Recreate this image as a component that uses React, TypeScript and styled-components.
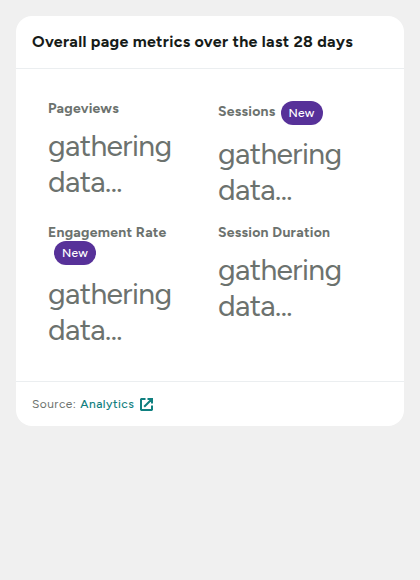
import React from 'react';
import styled, { createGlobalStyle } from 'styled-components';

const Global = createGlobalStyle`
  * { box-sizing: border-box; }
  body {
    margin: 0;
    background: #f0f0f0;
    color: #6c726e;
    font-family: 'Google Sans', Figtree, Lato, sans-serif;
  }
`;

const Page = styled.main`
  padding: 16px;
`;

const Card = styled.section`
  display: flex;
  flex-direction: column;
  height: 410px;
  background: #fff;
  border-radius: 16px;
  overflow: hidden;
`;

const Title = styled.h3`
  flex: none;
  height: 53px;
  margin: 0;
  padding: 14px 16px;
  border-bottom: 1px solid #ebeef0;
  color: #161b18;
  font-size: 16px;
  font-weight: 700;
  line-height: 24px;
  letter-spacing: 0.3px;
  white-space: nowrap;
`;

const Metrics = styled.div`
  flex: 1;
  display: grid;
  grid-template-columns: repeat(2, 1fr);
  grid-template-rows: 124px auto;
  column-gap: 16px;
  padding: 29px 32px 0;
`;

const Label = styled.div<{ $stacked?: boolean; $inline?: boolean }>`
  display: flex;
  flex-direction: ${p => (p.$stacked ? 'column' : 'row')};
  align-items: flex-start;
  height: ${p => (p.$stacked ? 54 : p.$inline ? 38 : 30)}px;
  padding-top: ${p => (p.$inline ? 3 : 0)}px;
  font-size: 14px;
  font-weight: 700;
  line-height: 22px;
  letter-spacing: 0.25px;
  white-space: nowrap;
`;

const Badge = styled.span<{ $stacked?: boolean }>`
  width: 42px;
  height: 24px;
  margin: ${p => (p.$stacked ? '-3px 0 0 6px' : '0 0 0 5px')};
  border-radius: 12px;
  background: #573199;
  color: #fff;
  font-size: 12px;
  font-weight: 500;
  line-height: 24px;
  text-align: center;
`;

const Value = styled.div`
  font-size: 30px;
  font-weight: 400;
  line-height: 36px;
  letter-spacing: -0.6px;
`;

const Footer = styled.footer`
  flex: none;
  display: flex;
  align-items: center;
  height: 45px;
  padding: 0 16px;
  border-top: 1px solid #ebeef0;
  font-size: 12px;
  font-weight: 400;
  letter-spacing: 0.45px;
`;

const SourceLink = styled.a`
  display: flex;
  align-items: center;
  gap: 6px;
  margin-left: 4px;
  color: #108080;
  font-weight: 500;
`;

const metrics = [
  { name: 'Pageviews' },
  { name: 'Sessions', badge: true },
  { name: 'Engagement Rate', badge: true, stacked: true },
  { name: 'Session Duration' },
];

export default function App() {
  return (
    <Page>
      <Global />
      <Card>
        <Title>Overall page metrics over the last 28 days</Title>
        <Metrics>
          {metrics.map(m => (
            <div key={m.name}>
              <Label $stacked={m.stacked} $inline={m.badge && !m.stacked}>
                <span>{m.name}</span>
                {m.badge && <Badge $stacked={m.stacked}>New</Badge>}
              </Label>
              <Value>gathering data...</Value>
            </div>
          ))}
        </Metrics>
        <Footer>
          <span>Source:</span>
          <SourceLink>
            Analytics
            <svg width="13" height="13" viewBox="0 0 13 13" fill="none" stroke="currentColor" strokeWidth="2">
              <path d="M5.5 1H1.5L1 1.5v10l.5.5h10l.5-.5V7.5M7.5 1H12v4.5M12 1L4.2 8.8" />
            </svg>
          </SourceLink>
        </Footer>
      </Card>
    </Page>
  );
}
